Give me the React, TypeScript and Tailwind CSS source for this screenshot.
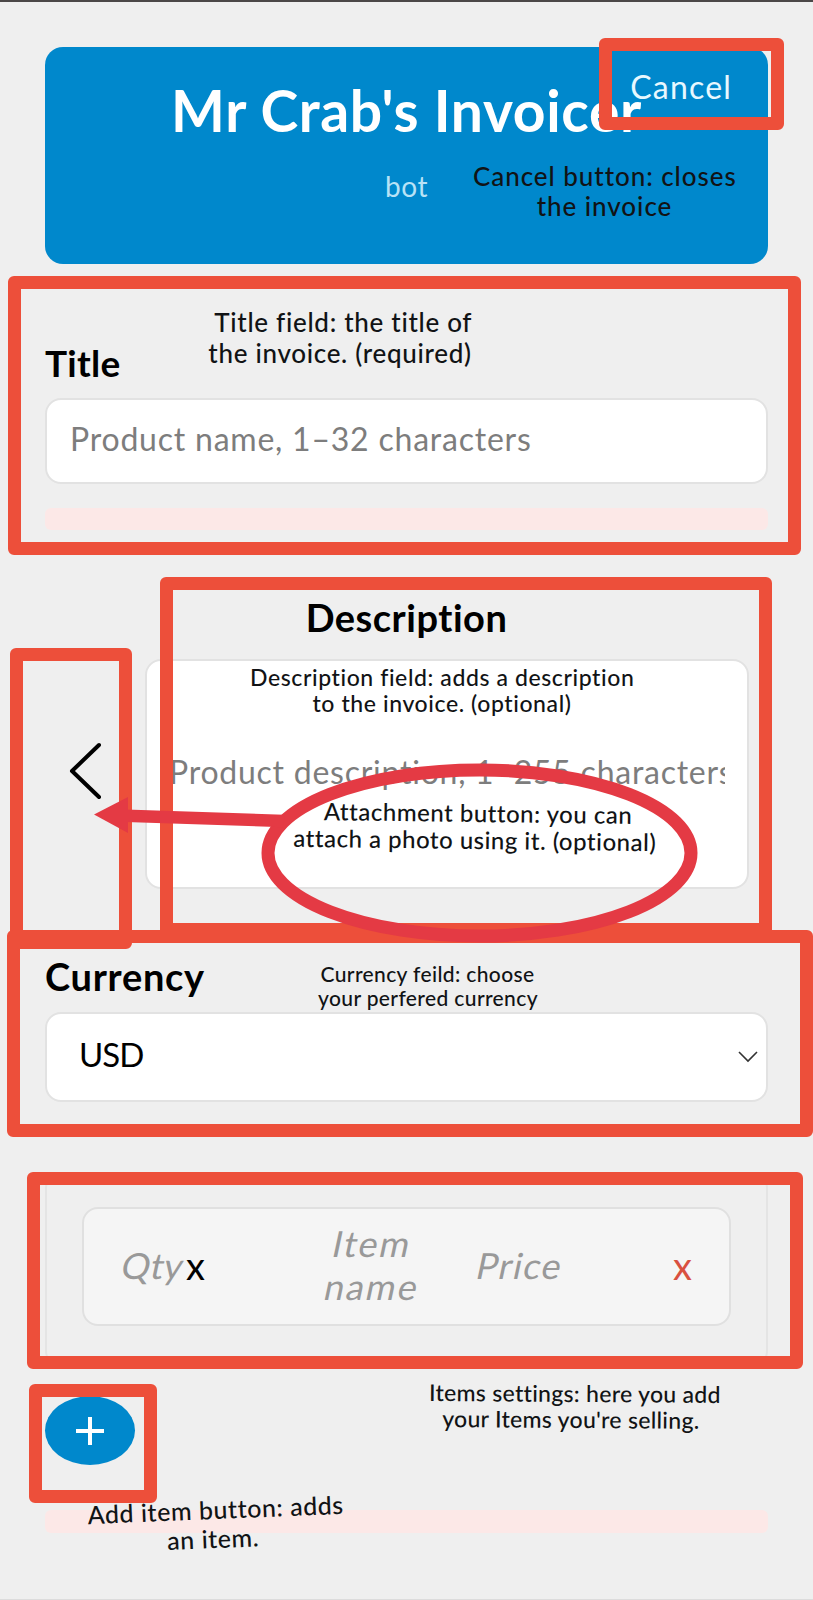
import React from 'react';

const frame = 'absolute box-border rounded-[6px] border-[13px] border-[#ed4f3a]';
const note = 'absolute whitespace-pre text-center text-[#111315] font-medium';
const field = 'rounded-[16px] border-2 border-[#e2e2e2] bg-white';

function Header() {
  return (
    <header className="relative mt-[47px] flex h-[217px] flex-col items-center rounded-[18px] bg-[#0088cc] text-white">
      <h1 className="mt-[29px] text-[57px] leading-[68px] font-bold tracking-[0.65px] whitespace-nowrap">Mr Crab's Invoicer</h1>
      <p className="mt-[24px] text-[28px] leading-[36px] tracking-[0.6px] text-[#b8e2f6]">bot</p>
      <button className="absolute top-[20px] right-[36px] text-[32px] leading-[40px] tracking-[1.2px] text-[#e8f8ff]">Cancel</button>
    </header>
  );
}

function Items() {
  return (
    <section className="mt-[70px] h-[195px] rounded-[16px] border-2 border-[#e4e4e4] px-[35px] pt-[33px]">
      <div className="flex h-[119px] items-center rounded-[16px] border-2 border-[#e0e0e0] bg-[#f5f5f5] pb-[3px] text-[36px] leading-[43px] tracking-[1px] text-[#999999]">
        <span className="ml-[38px] w-[64px] -skew-x-12 tracking-[0.5px]">Qty</span>
        <span className="w-[20px] text-[38px] text-black">x</span>
        <span className="ml-[101px] flex w-[130px] flex-col items-center tracking-[2px]">
          <span className="-skew-x-12">Item</span>
          <span className="-skew-x-12">name</span>
        </span>
        <span className="ml-[40px] w-[90px] -skew-x-12 tracking-[1.4px]">Price</span>
        <span className="ml-[106px] text-[38px] text-[#d9503f]">x</span>
      </div>
    </section>
  );
}

export default function App() {
  return (
    <div className="relative h-[1600px] w-[813px] overflow-hidden border-t-2 border-b border-t-[#4b4748] border-b-[#dcdcdc] bg-[#efefef] font-['Lato','Liberation_Sans',sans-serif]">
      <main className="-mt-[2px] flex flex-col px-[45px]">
        <Header />
        <label className="mt-[79px] text-[37px] leading-[40px] font-bold tracking-[0.3px]">Title</label>
        <div className={`${field} mt-[15px] flex h-[86px] items-center px-[23px] pb-[4px] text-[32px] tracking-[0.78px] text-[#7d7d7d]`}>
          <span>Product name, 1–32 characters</span>
        </div>
        <div className="mt-[24px] h-[22px] rounded-[6px] bg-[#fce8e7]" />
        <label className="mt-[67px] text-center text-[38px] leading-[40px] font-bold tracking-[0.5px]">Description</label>
        <div className="mt-[22px] flex h-[230px] items-center">
          <svg className="mb-[7px] ml-[24px] h-[58px] w-[34px]" viewBox="0 0 34 58" fill="none" stroke="#000" strokeWidth="4" strokeLinecap="round" strokeLinejoin="round"><path d="M30 3 3 29 30 55" /></svg>
          <div className={`${field} ml-[42px] flex h-[230px] w-[604px] items-center px-[22px] pb-[4px] text-[32px] tracking-[0.75px] text-[#7d7d7d]`}>
            <span className="w-[556px] overflow-hidden whitespace-nowrap">Product description, 1–255 characters</span>
          </div>
        </div>
        <label className="mt-[67px] text-[38px] leading-[40px] font-bold tracking-[0.7px]">Currency</label>
        <div className={`${field} mt-[16px] flex h-[90px] items-center justify-between pr-[7px] pl-[32px] text-[33px] tracking-[-1px]`}>
          <span className="mb-[4px]">USD</span>
          <svg className="h-[14px] w-[22px]" viewBox="0 0 22 14" fill="none" stroke="#333" strokeWidth="1.6"><path d="m2 2 9 9 9-9" /></svg>
        </div>
        <Items />
        <button className="mt-[29px] flex h-[69px] w-[90px] items-center justify-center rounded-[50%] bg-[#0088cc]">
          <svg className="size-[32px]" viewBox="0 0 32 32" stroke="#fff" strokeWidth="4"><path d="M16 2v28M2 16h28" /></svg>
        </button>
        <div className="mt-[45px] h-[23px] rounded-[6px] bg-[#fce8e7]" />
      </main>

      <div className={`${frame} top-[36px] left-[599px] h-[92px] w-[185px]`} />
      <div className={`${frame} top-[274px] left-[8px] h-[279px] w-[793px]`} />
      <div className={`${frame} top-[575px] left-[160px] h-[359px] w-[612px]`} />
      <div className={`${frame} top-[646px] left-[10px] h-[301px] w-[122px]`} />
      <div className={`${frame} top-[928px] left-[7px] h-[207px] w-[806px]`} />
      <div className={`${frame} top-[1170px] left-[27px] h-[197px] w-[776px]`} />
      <div className={`${frame} top-[1382px] left-[29px] h-[119px] w-[128px]`} />
      <svg className="absolute top-[738px] left-[80px] h-[220px] w-[640px]" viewBox="80 740 640 220" fill="none" stroke="#e43a44">
        <ellipse cx="479.5" cy="853" rx="211.5" ry="83" strokeWidth="13" />
        <path d="M284 821 118 815.5" strokeWidth="12.5" />
        <path d="m94 814.5 34-17.5v36z" fill="#e43a44" stroke="none" />
      </svg>

      <p className={`${note} top-[159px] left-[473px] w-[263px] text-[26px] leading-[30px] tracking-[0.95px]`}>{"Cancel button: closes\nthe invoice"}</p>
      <p className={`${note} top-[305px] left-[207px] w-[266px] text-[26px] leading-[31px] tracking-[0.7px]`}>{" Title field: the title of\nthe invoice. (required)"}</p>
      <p className={`${note} top-[662px] left-[250px] w-[384px] text-[23px] leading-[26px] tracking-[0.6px]`}>{"Description field: adds a description\nto the invoice. (optional)"}</p>
      <p className={`${note} top-[797px] left-[293px] w-[364px] rotate-[0.7deg] text-[24px] leading-[27px] tracking-[0.5px]`}>{" Attachment button: you can\nattach a photo using it. (optional)"}</p>
      <p className={`${note} top-[960px] left-[318px] w-[219px] text-[21px] leading-[24px] tracking-[0.37px]`}>{"Currency feild: choose\nyour perfered currency"}</p>
      <p className={`${note} top-[1378px] left-[429px] w-[290px] rotate-[0.4deg] text-[23px] leading-[26px] tracking-[0.3px]`}>{"Items settings: here you add\nyour Items you're selling. "}</p>
      <p className={`${note} top-[1493px] left-[88px] w-[256px] rotate-[-2.3deg] text-[25px] leading-[29px] tracking-[0.55px]`}>{"Add item button: adds\nan item. "}</p>
    </div>
  );
}
